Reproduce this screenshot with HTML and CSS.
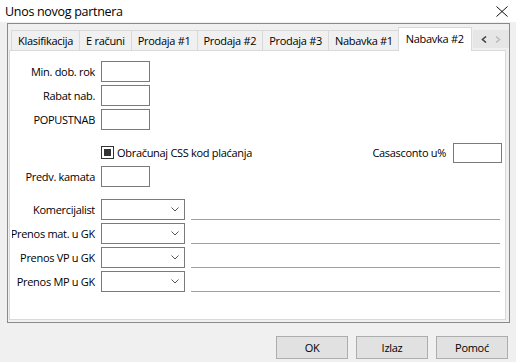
FILE: index.html
```html
<!DOCTYPE html>
<html lang="sr">
<head>
    <meta charset="UTF-8">
    <meta name="viewport" content="width=device-width, initial-scale=1.0">
    <title>Unos novog partnera</title>
    <link rel="stylesheet" href="styles.css">
</head>
<body>
    <div class="titlebar">
        <span class="title">Unos novog partnera</span>
        <svg class="close" width="12" height="11" viewBox="0 0 12 11">
            <path d="M0.5 0.5L11.5 10.5M11.5 0.5L0.5 10.5" stroke="#111" stroke-width="1" fill="none"/>
        </svg>
    </div>

    <div class="frame">
        <div class="tabs">
            <div class="tab">Klasifikacija</div>
            <div class="tab">E računi</div>
            <div class="tab">Prodaja #1</div>
            <div class="tab">Prodaja #2</div>
            <div class="tab">Prodaja #3</div>
            <div class="tab">Nabavka #1</div>
            <div class="tab active">Nabavka #2</div>
            <div class="tab-arrows">
                <svg width="6" height="7" viewBox="0 0 6 7"><path d="M5 0.5L1.5 3.5L5 6.5" stroke="#444" stroke-width="1.6" fill="none"/></svg>
                <svg width="6" height="7" viewBox="0 0 6 7"><path d="M1 0.5L4.5 3.5L1 6.5" stroke="#bdbdbd" stroke-width="1.6" fill="none"/></svg>
            </div>
        </div>

        <div class="panel">
            <div class="row">
                <div class="lbl">Min. dob. rok</div>
                <div class="box"></div>
            </div>
            <div class="row">
                <div class="lbl">Rabat nab.</div>
                <div class="box"></div>
            </div>
            <div class="row">
                <div class="lbl">POPUSTNAB</div>
                <div class="box"></div>
            </div>

            <div class="row group">
                <div class="lbl"></div>
                <div class="check"><span class="check-mark"></span></div>
                <span class="check-text">Obračunaj CSS kod plaćanja</span>
                <div class="right-field">
                    <span>Casasconto u%</span>
                    <div class="box short"></div>
                </div>
            </div>
            <div class="row">
                <div class="lbl">Predv. kamata</div>
                <div class="box"></div>
            </div>

            <div class="row group">
                <div class="lbl">Komercijalist</div>
                <div class="combo"><svg width="8" height="5" viewBox="0 0 8 5"><path d="M0.5 0.5L4 4L7.5 0.5" stroke="#555" stroke-width="1" fill="none"/></svg></div>
                <div class="line"></div>
            </div>
            <div class="row">
                <div class="lbl">Prenos mat. u GK</div>
                <div class="combo"><svg width="8" height="5" viewBox="0 0 8 5"><path d="M0.5 0.5L4 4L7.5 0.5" stroke="#555" stroke-width="1" fill="none"/></svg></div>
                <div class="line"></div>
            </div>
            <div class="row">
                <div class="lbl">Prenos VP u GK</div>
                <div class="combo"><svg width="8" height="5" viewBox="0 0 8 5"><path d="M0.5 0.5L4 4L7.5 0.5" stroke="#555" stroke-width="1" fill="none"/></svg></div>
                <div class="line"></div>
            </div>
            <div class="row">
                <div class="lbl">Prenos MP u GK</div>
                <div class="combo"><svg width="8" height="5" viewBox="0 0 8 5"><path d="M0.5 0.5L4 4L7.5 0.5" stroke="#555" stroke-width="1" fill="none"/></svg></div>
                <div class="line"></div>
            </div>
        </div>
    </div>

    <div class="buttons">
        <button>OK</button>
        <button>Izlaz</button>
        <button>Pomoć</button>
    </div>
</body>
</html>
```

FILE: styles.css
```css
* {
    margin: 0;
    padding: 0;
    box-sizing: border-box;
}

body {
    width: 516px;
    height: 362px;
    overflow: hidden;
    background: #f0f0f0;
    color: #000;
    font-family: "Open Sans", "Noto Sans", sans-serif;
    font-size: 11px;
    letter-spacing: -0.3px;
}

.titlebar {
    height: 22px;
    background: #fff;
    display: flex;
    align-items: center;
    justify-content: space-between;
    padding: 0 8px 0 5px;
}

.title {
    font-size: 12.5px;
}

.frame {
    height: 300px;
    margin: 1px 6px 0 7px;
    border: 1px solid #8a8a8a;
    display: flex;
    flex-direction: column;
    padding: 0 3px 2px 1px;
}

.tabs {
    height: 26px;
    display: flex;
    align-items: flex-end;
    padding-left: 2px;
}

.tab {
    height: 20px;
    padding: 0 6px;
    display: flex;
    align-items: center;
    border: 1px solid #d9d9d9;
    border-bottom: none;
    margin-right: -1px;
    background: #f0f0f0;
    white-space: nowrap;
}

.tab.active {
    position: relative;
    z-index: 1;
    height: 24px;
    margin: 0 1px -1px -1px;
    padding: 0 7px 3px;
    background: #fff;
}

.tab-arrows {
    margin: 0 -3px 2px auto;
    width: 36px;
    height: 18px;
    background: #e6e6e6;
    display: flex;
    align-items: center;
    justify-content: space-around;
    padding: 0 4px;
}

.panel {
    flex: 1;
    background: #fff;
    border: 1px solid #d9d9d9;
    padding: 10px 0 0 2px;
}

.row {
    height: 21px;
    margin-bottom: 3px;
    display: flex;
    align-items: center;
}

.row.group {
    margin-top: 12px;
}

.lbl {
    width: 83px;
    margin-right: 6px;
    display: flex;
    justify-content: flex-end;
    overflow: hidden;
    white-space: nowrap;
}

.box {
    width: 49px;
    height: 21px;
    border: 1px solid #7a7a7a;
}

.box.short {
    height: 20px;
    margin-left: 7px;
}

.check {
    width: 13px;
    height: 13px;
    border: 1px solid #333;
    display: flex;
    align-items: center;
    justify-content: center;
}

.check-mark {
    width: 7px;
    height: 7px;
    background: #333;
}

.check-text {
    margin-left: 3px;
}

.right-field {
    margin-left: auto;
    margin-right: 3px;
    display: flex;
    align-items: center;
}

.combo {
    width: 84px;
    height: 21px;
    border: 1px solid #7a7a7a;
    display: flex;
    align-items: center;
    justify-content: flex-end;
    padding-right: 5px;
}

.line {
    flex: 1;
    align-self: stretch;
    margin: 0 5px 0 6px;
    border-bottom: 1px solid #a0a0a0;
}

.buttons {
    display: flex;
    justify-content: flex-end;
    gap: 8px;
    margin-top: 13px;
    padding-right: 8px;
}

.buttons button {
    width: 72px;
    height: 23px;
    background: #e1e1e1;
    border: 1px solid #adadad;
    font-family: inherit;
    font-size: 11px;
    letter-spacing: inherit;
    color: #000;
}
```
